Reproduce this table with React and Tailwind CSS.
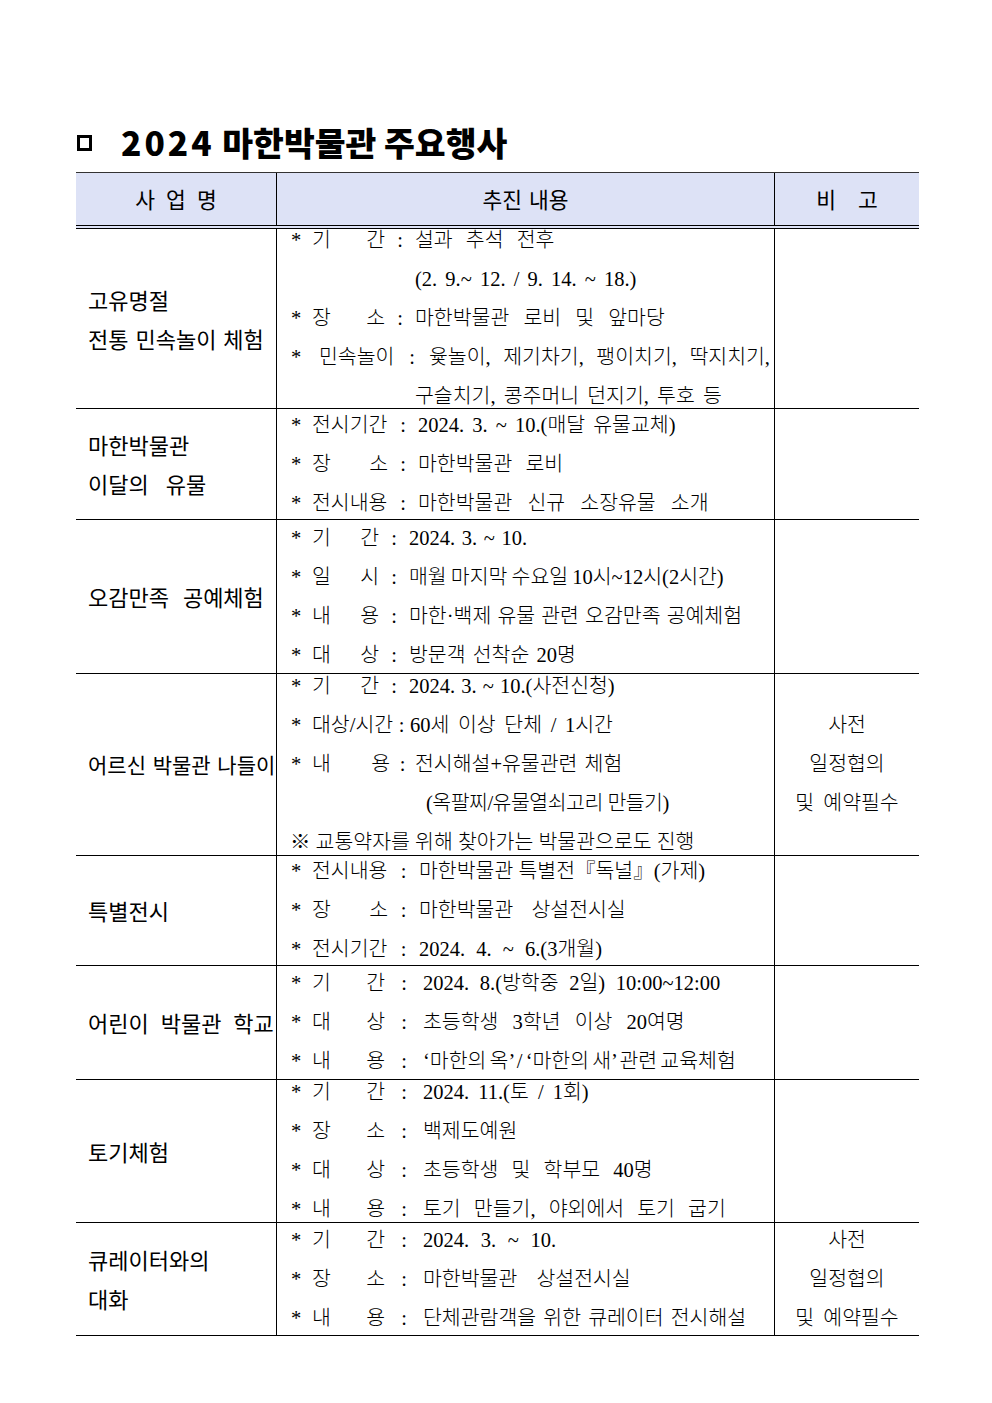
import React from 'react';

// 2024 마한박물관 주요행사 table
const rows = [
    {
        h: 'h-[180px]',
        name: [
            { t: '고유명절' },
            { t: '전통 민속놀이 체험', ws: '[word-spacing:2px]' },
        ],
        w: 'w-[73px]', c: 'w-[30px]',
        lines: [
            { l: '기간', v: '설과 추석 전후', ws: '[word-spacing:8px]' },
            { indent: 'pl-[124px]', v: '(2. 9.~ 12. / 9. 14. ~ 18.)', ws: '[word-spacing:3px]' },
            { l: '장소', v: '마한박물관 로비 및 앞마당', ws: '[word-spacing:9px]' },
            { games: true },
            { indent: 'pl-[124px]', v: '구슬치기, 콩주머니 던지기, 투호 등', ws: '[word-spacing:3px]' },
        ],
    },
    {
        h: 'h-[111px]',
        name: [
            { t: '마한박물관' },
            { t: '이달의 유물', ws: '[word-spacing:12px]' },
        ],
        w: 'w-[76px]', c: 'w-[30px]',
        lines: [
            { l: '전시기간', v: '2024. 3. ~ 10.(매달 유물교체)', ws: '[word-spacing:3px]' },
            { l: '장소', v: '마한박물관 로비', ws: '[word-spacing:8px]' },
            { l: '전시내용', v: '마한박물관 신규 소장유물 소개', ws: '[word-spacing:10px]' },
        ],
    },
    {
        h: 'h-[154px]',
        name: [{ t: '오감만족 공예체험', ws: '[word-spacing:9px]' }],
        w: 'w-[67px]', c: 'w-[30px]',
        lines: [
            { l: '기간', v: '2024. 3. ~ 10.', ws: '[word-spacing:1.5px]' },
            { l: '일시', v: '매월 마지막 수요일 10시~12시(2시간)', ws: '[word-spacing:-1px]' },
            { l: '내용', v: '마한·백제 유물 관련 오감만족 공예체험', ws: '[word-spacing:1px]' },
            { l: '대상', v: '방문객 선착순 20명', ws: '[word-spacing:2px]' },
        ],
    },
    {
        h: 'h-[182px]',
        name: [{ t: '어르신 박물관 나들이', ws: 'text-[21px] [word-spacing:2px]' }],
        w: 'w-[67px]', c: 'w-[30px]',
        note: true,
        lines: [
            { l: '기간', v: '2024. 3. ~ 10.(사전신청)', ws: '[word-spacing:1px]' },
            { l: '대상/시간', w: 'w-[81px]', c: 'w-[17px]', v: '60세 이상 단체 / 1시간', ws: '[word-spacing:3.5px]' },
            { l: '내용', w: 'w-[78px]', c: 'w-[25px]', v: '전시해설+유물관련 체험', ws: '[word-spacing:2px]' },
            { indent: 'pl-[135px]', v: '(옥팔찌/유물열쇠고리 만들기)', ws: 'tracking-[-0.5px]' },
            { plain: '※ 교통약자를 위해 찾아가는 박물관으로도 진행' },
        ],
    },
    {
        h: 'h-[110px]',
        name: [{ t: '특별전시' }],
        w: 'w-[76px]', c: 'w-[31px]',
        lines: [
            { l: '전시내용', v: '마한박물관 특별전『독널』(가제)' },
            { l: '장소', v: '마한박물관 상설전시실', ws: '[word-spacing:13px]' },
            { l: '전시기간', v: '2024. 4. ~ 6.(3개월)', ws: '[word-spacing:6px]' },
        ],
    },
    {
        h: 'h-[114px]',
        name: [{ t: '어린이 박물관 학교', ws: '[word-spacing:7px]' }],
        w: 'w-[73px]', c: 'w-[38px]',
        lines: [
            { l: '기간', v: '2024. 8.(방학중 2일) 10:00~12:00', ws: '[word-spacing:5.5px]' },
            { l: '대상', v: '초등학생 3학년 이상 20여명', ws: '[word-spacing:9px]' },
            { l: '내용', v: '‘마한의 옥’ / ‘마한의 새’ 관련 교육체험', ws: '[word-spacing:-2px]' },
        ],
    },
    {
        h: 'h-[143px]',
        name: [{ t: '토기체험' }],
        w: 'w-[73px]', c: 'w-[38px]',
        lines: [
            { l: '기간', v: '2024. 11.(토 / 1회)', ws: '[word-spacing:4px]' },
            { l: '장소', v: '백제도예원' },
            { l: '대상', v: '초등학생 및 학부모 40명', ws: '[word-spacing:8px]' },
            { l: '내용', v: '토기 만들기, 야외에서 토기 굽기', ws: '[word-spacing:8px]' },
        ],
    },
    {
        h: 'h-[113px]',
        name: [{ t: '큐레이터와의' }, { t: '대화' }],
        w: 'w-[73px]', c: 'w-[38px]',
        note: true,
        lines: [
            { l: '기간', v: '2024. 3. ~ 10.', ws: '[word-spacing:6.5px]' },
            { l: '장소', v: '마한박물관 상설전시실', ws: '[word-spacing:14px]' },
            { l: '내용', v: '단체관람객을 위한 큐레이터 전시해설', ws: '[word-spacing:2px]' },
        ],
    },
];

const Line = ({ line, w, c }) => {
    if (line.games) {
        return (
            <div className="flex whitespace-nowrap">
                <span className="w-[28px] shrink-0">*</span>
                <span className="w-[76px] shrink-0">민속놀이</span>
                <span className="w-[34px] shrink-0 text-center">:</span>
                <span className="w-[341px] flex justify-between">
                    <span>윷놀이,</span>
                    <span>제기차기,</span>
                    <span>팽이치기,</span>
                    <span>딱지치기,</span>
                </span>
            </div>
        );
    }
    if (line.plain) {
        return <div className="whitespace-nowrap -ml-px">{line.plain}</div>;
    }
    if (line.indent) {
        return <div className={`whitespace-nowrap ${line.indent} ${line.ws || ''}`}>{line.v}</div>;
    }
    const chars = line.l.length === 2 ? line.l.split('') : [line.l];
    return (
        <div className="flex whitespace-nowrap">
            <span className="w-[21px] shrink-0">*</span>
            <span className={`flex justify-between shrink-0 ${line.w || w}`}>
                {chars.map((ch, i) => <span key={i}>{ch}</span>)}
            </span>
            <span className={`shrink-0 text-center ${line.c || c}`}>:</span>
            <span className={line.ws || ''}>{line.v}</span>
        </div>
    );
};

const App = () => {
    return (
        <div className="min-h-screen w-full bg-white text-black pt-[122px] pl-[76px] [font-family:'Noto_Sans_CJK_KR',sans-serif]">
            {/* Title */}
            <div className="flex items-center h-[40px] mb-[10px]">
                <span className="ml-px mt-[2px] w-[15px] h-[16px] border-[3px] border-black" />
                <h1 className="ml-[29px] text-[33.5px] font-black leading-none whitespace-nowrap">
                    <span className="tracking-[3px]">2024</span> 마한박물관 주요행사
                </h1>
            </div>

            {/* Table */}
            <div className="w-[843px] border-t border-[#333]">
                <div className="flex h-[56px] bg-[#dde2f6] border-b-[4px] border-double border-black text-[21.5px]">
                    <div className="w-[201px] border-r border-black flex items-center justify-center gap-[11px]">
                        <span>사</span><span>업</span><span>명</span>
                    </div>
                    <div className="w-[498px] border-r border-black flex items-center justify-center [word-spacing:2px]">추진 내용</div>
                    <div className="flex-1 flex items-center justify-center gap-[22px]">
                        <span>비</span><span>고</span>
                    </div>
                </div>

                {rows.map((row, i) => (
                    <div key={i} className={`flex border-b border-black ${row.h}`}>
                        <div className="w-[201px] shrink-0 border-r border-black flex flex-col justify-center pl-[12px] text-[22px] leading-[39px] whitespace-nowrap">
                            {row.name.map((n, j) => <div key={j} className={n.ws || ''}>{n.t}</div>)}
                        </div>
                        <div className="w-[498px] shrink-0 border-r border-black flex flex-col justify-center pl-[14px] text-[20.5px] leading-[39px] font-light [font-family:'Liberation_Serif','Noto_Sans_CJK_KR',serif]">
                            {row.lines.map((line, j) => <Line key={j} line={line} w={row.w} c={row.c} />)}
                        </div>
                        <div className="flex-1 flex flex-col justify-center items-center text-[20.5px] leading-[39px] font-light [font-family:'Liberation_Serif','Noto_Sans_CJK_KR',serif]">
                            {row.note && (
                                <>
                                    <div>사전</div>
                                    <div>일정협의</div>
                                    <div className="[word-spacing:4px]">및 예약필수</div>
                                </>
                            )}
                        </div>
                    </div>
                ))}
            </div>
        </div>
    );
};

export default App;
